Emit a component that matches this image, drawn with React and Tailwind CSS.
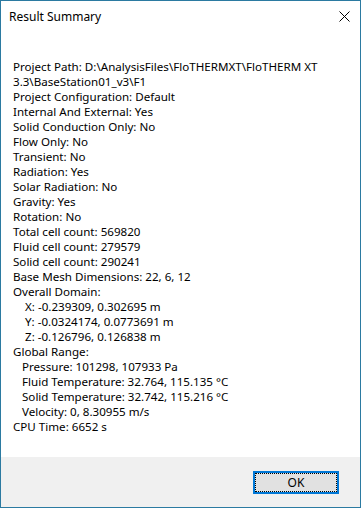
export default function App() {
  const lines = [
    ["Project Path: D:\\AnalysisFiles\\FloTHERMXT\\FloTHERM XT", 0],
    ["3.3\\BaseStation01_v3\\F1", 0],
    ["Project Configuration: Default", 0],
    ["Internal And External: Yes", 0],
    ["Solid Conduction Only: No", 0],
    ["Flow Only: No", 0],
    ["Transient: No", 0],
    ["Radiation: Yes", 0],
    ["Solar Radiation: No", 0],
    ["Gravity: Yes", 0],
    ["Rotation: No", 0],
    ["Total cell count: 569820", 0],
    ["Fluid cell count: 279579", 0],
    ["Solid cell count: 290241", 0],
    ["Base Mesh Dimensions: 22, 6, 12", 0],
    ["Overall Domain:", 0],
    ["X: -0.239309, 0.302695 m", 2],
    ["Y: -0.0324174, 0.0773691 m", 2],
    ["Z: -0.126796, 0.126838 m", 2],
    ["Global Range:", 0],
    ["Pressure: 101298, 107933 Pa", 1],
    ["Fluid Temperature: 32.764, 115.135 °C", 1],
    ["Solid Temperature: 32.742, 115.216 °C", 1],
    ["Velocity: 0, 8.30955 m/s", 1],
    ["CPU Time: 6652 s", 0],
  ];
  return (
    <div
      className="w-[361px] h-[508px] border border-[#2b7aa1] bg-white flex flex-col text-black text-[11.6px]"
      style={{ fontFamily: '"Segoe UI", "Noto Sans", sans-serif' }}
    >
      <div className="h-[30px] flex items-center justify-between pl-[8px] pr-[9px] shrink-0">
        <span className="leading-[15px] text-[12px]">Result Summary</span>
        <svg width="11" height="11" viewBox="0 0 11 11" className="mr-[1px]">
          <path d="M0.5 0.5 L10.5 10.5 M10.5 0.5 L0.5 10.5" stroke="#000" strokeWidth="1" fill="none" />
        </svg>
      </div>
      <div className="flex-1 pl-[12px] pt-[28px] leading-[15px] whitespace-pre">
        {lines.map(([t, ind], i) => (
          <div key={i} className={ind === 2 ? "h-[15px] pl-[12px]" : ind === 1 ? "h-[15px] pl-[9px]" : "h-[15px]"}>
            {t}
          </div>
        ))}
      </div>
      <div className="h-[50px] bg-[#f0f0f0] flex justify-end items-start pt-[14px] pr-[21px] shrink-0">
        <div className="w-[86px] h-[23px] border-2 border-[#0078d7] bg-[#e1e1e1]">
          <div className="w-full h-full border border-dotted border-black flex items-center justify-center leading-[15px] text-[12px]">
            OK
          </div>
        </div>
      </div>
    </div>
  );
}
